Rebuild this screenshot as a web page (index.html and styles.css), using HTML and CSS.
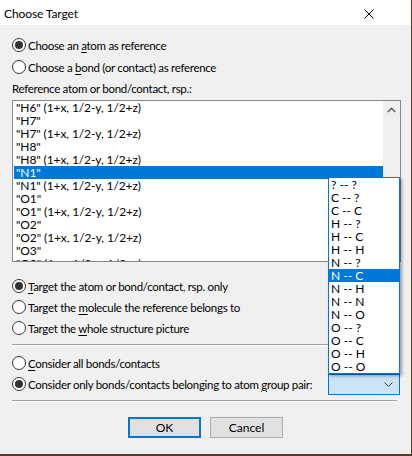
FILE: index.html
```html
<!DOCTYPE HTML>
<html>

<head>
  <title>Choose Target</title>
  <meta name="viewport" content="width=device-width, initial-scale=1.0">
  <link rel="stylesheet" href="styles.css">
</head>

<body>
  <div class="dialog">
    <!-- ------------------------------ TITLE ----------------------------- -->
    <div class="titlebar">
      <span class="title">Choose Target</span>
      <svg class="close" width="10" height="10" viewBox="0 0 10 10">
        <path d="M0.5 0.5 L9.5 9.5 M9.5 0.5 L0.5 9.5" stroke="#000" stroke-width="1" fill="none" />
      </svg>
    </div>

    <div class="content">
      <!-- ---------------------------- REFERENCE --------------------------- -->
      <div class="row first">
        <span class="radio checked"></span>
        <span>Choose an <u>a</u>tom as reference</span>
      </div>
      <div class="row">
        <span class="radio"></span>
        <span>Choose a <u>b</u>ond (or contact) as reference</span>
      </div>

      <div class="caption">Reference atom or bond/contact, rsp.:</div>

      <div class="listbox">
        <div class="items">
          <div class="item">"H6" (1+x, 1/2-y, 1/2+z)</div>
          <div class="item">"H7"</div>
          <div class="item">"H7" (1+x, 1/2-y, 1/2+z)</div>
          <div class="item">"H8"</div>
          <div class="item">"H8" (1+x, 1/2-y, 1/2+z)</div>
          <div class="item selected">"N1"</div>
          <div class="item">"N1" (1+x, 1/2-y, 1/2+z)</div>
          <div class="item">"O1"</div>
          <div class="item">"O1" (1+x, 1/2-y, 1/2+z)</div>
          <div class="item">"O2"</div>
          <div class="item">"O2" (1+x, 1/2-y, 1/2+z)</div>
          <div class="item">"O3"</div>
          <div class="item">"O3" (1+x, 1/2-y, 1/2+z)</div>
        </div>
        <div class="scrollbar">
          <svg width="9" height="6" viewBox="0 0 9 6">
            <path d="M0.8 5 L4.5 1.3 L8.2 5" stroke="#606060" stroke-width="1.6" fill="none" />
          </svg>
        </div>
      </div>

      <!-- ----------------------------- TARGET ----------------------------- -->
      <div class="group">
        <div class="row">
          <span class="radio checked"></span>
          <span><u>T</u>arget the atom or bond/contact, rsp. only</span>
        </div>
        <div class="row">
          <span class="radio"></span>
          <span>Target the <u>m</u>olecule the reference belongs to</span>
        </div>
        <div class="row">
          <span class="radio"></span>
          <span>Target the <u>w</u>hole structure picture</span>
        </div>
      </div>

      <div class="separator"></div>

      <!-- ----------------------------- FILTER ----------------------------- -->
      <div class="group">
        <div class="row">
          <span class="radio"></span>
          <span><u>C</u>onsider all bonds/contacts</span>
        </div>
        <div class="row">
          <span class="radio checked"></span>
          <span>Consider only bonds/contacts belonging to atom <u>g</u>roup pair:</span>
          <div class="combo">
            <svg width="9" height="5" viewBox="0 0 9 5">
              <path d="M0.5 0.5 L4.5 4.5 L8.5 0.5" stroke="#404040" stroke-width="1" fill="none" />
            </svg>
          </div>
        </div>
      </div>

      <div class="separator"></div>

      <!-- ----------------------------- BUTTONS ---------------------------- -->
      <div class="buttons">
        <button class="btn default">OK</button>
        <button class="btn">Cancel</button>
      </div>
    </div>

    <!-- ---------------------- ATOM GROUP PAIR POPUP --------------------- -->
    <div class="popup">
      <div class="opt">? -- ?</div>
      <div class="opt">C -- ?</div>
      <div class="opt">C -- C</div>
      <div class="opt">H -- ?</div>
      <div class="opt">H -- C</div>
      <div class="opt">H -- H</div>
      <div class="opt">N -- ?</div>
      <div class="opt selected">N -- C</div>
      <div class="opt">N -- H</div>
      <div class="opt">N -- N</div>
      <div class="opt">N -- O</div>
      <div class="opt">O -- ?</div>
      <div class="opt">O -- C</div>
      <div class="opt">O -- H</div>
      <div class="opt">O -- O</div>
    </div>
  </div>
</body>

</html>
```

FILE: styles.css
```css
html {
  font-family: Lato, "Liberation Sans", sans-serif;
  font-size: 11.5px;
  letter-spacing: -0.3px;
  color: #000;
}

body {
  margin: 0;
  width: 412px;
  height: 456px;
  background-color: #5a3a22;
  overflow: hidden;
}

u {
  text-decoration-thickness: 1px;
  text-underline-offset: 2px;
}

/* ------------------------------- DIALOG ------------------------------ */

.dialog {
  position: relative;
  width: 411px;
  height: 454px;
  background-color: #f0f0f0;
  display: flex;
  flex-direction: column;
}

.titlebar {
  height: 25px;
  background-color: #fff;
  display: flex;
  align-items: center;
  justify-content: space-between;
  padding: 0 37px 0 4px;
  flex-shrink: 0;
}

.title {
  font-size: 12px;
  letter-spacing: -0.1px;
  margin-top: 1px;
}

.close {
  margin-top: 3px;
}

.content {
  padding: 10px 10px 0 12px;
  display: flex;
  flex-direction: column;
}

/* ------------------------------- RADIO ------------------------------- */

.row {
  height: 20px;
  display: flex;
  align-items: center;
  white-space: nowrap;
}

.row + .row {
  margin-top: 2px;
}

.group .row + .row {
  margin-top: 1px;
}

.radio {
  box-sizing: border-box;
  width: 14px;
  height: 14px;
  margin-right: 2px;
  border: 1px solid #333;
  border-radius: 50%;
  background-color: #fff;
  display: flex;
  align-items: center;
  justify-content: center;
  flex-shrink: 0;
}

.radio.checked:before {
  content: "";
  width: 8px;
  height: 8px;
  border-radius: 50%;
  background-color: #333;
}

/* ------------------------------ LISTBOX ------------------------------ */

.caption {
  height: 16px;
  line-height: 16px;
  margin: 4px 0 3px 0;
}

.listbox {
  box-sizing: border-box;
  height: 162px;
  border: 1px solid #828790;
  background-color: #fff;
  display: flex;
  overflow: hidden;
}

.items {
  flex: 1;
  padding: 0 0 0 1px;
  overflow: hidden;
}

.item {
  height: 13px;
  line-height: 13px;
  padding-left: 2px;
  font-size: 12px;
  letter-spacing: -0.1px;
  white-space: nowrap;
}

.item.selected {
  background-color: #0078d7;
  color: #fff;
}

.scrollbar {
  width: 17px;
  flex-shrink: 0;
  background-color: #f0f0f0;
  display: flex;
  justify-content: center;
  padding-top: 6px;
  box-sizing: border-box;
}

/* ------------------------------- GROUPS ------------------------------ */

.group {
  margin-top: 14px;
}

.group + .separator {
  margin-top: 6px;
}

.separator {
  height: 1px;
  margin-right: 4px;
  background-color: #a0a0a0;
  border-bottom: 1px solid #fff;
}

.separator + .group {
  margin-top: 7px;
}

.combo {
  box-sizing: border-box;
  width: 72px;
  height: 21px;
  flex-shrink: 0;
  margin-left: auto;
  margin-right: 1px;
  margin-top: 1px;
  border: 1px solid #0078d7;
  background-color: #cce4f7;
  display: flex;
  align-items: center;
  justify-content: flex-end;
  padding-right: 6px;
}

/* ------------------------------ BUTTONS ------------------------------ */

.buttons {
  display: flex;
  justify-content: center;
  gap: 9px;
  margin-top: 15px;
  padding-right: 2px;
}

.btn {
  box-sizing: border-box;
  width: 73px;
  height: 21px;
  font-family: inherit;
  font-size: 12px;
  letter-spacing: 0;
  color: #000;
  background-color: #e1e1e1;
  border: 1px solid #adadad;
  padding: 0;
}

.btn.default {
  border: 2px solid #0078d7;
}

/* ------------------------------- POPUP ------------------------------- */

.popup {
  position: absolute;
  left: 328px;
  top: 177px;
  width: 72px;
  box-sizing: border-box;
  border: 1px solid #0078d7;
  background-color: #fff;
  box-shadow: 2px 2px 3px rgba(0, 0, 0, .35);
}

.opt {
  height: 13px;
  line-height: 13px;
  padding-left: 2px;
  font-size: 12px;
  letter-spacing: 0;
  white-space: nowrap;
}

.opt.selected {
  background-color: #0078d7;
  color: #fff;
}
```
